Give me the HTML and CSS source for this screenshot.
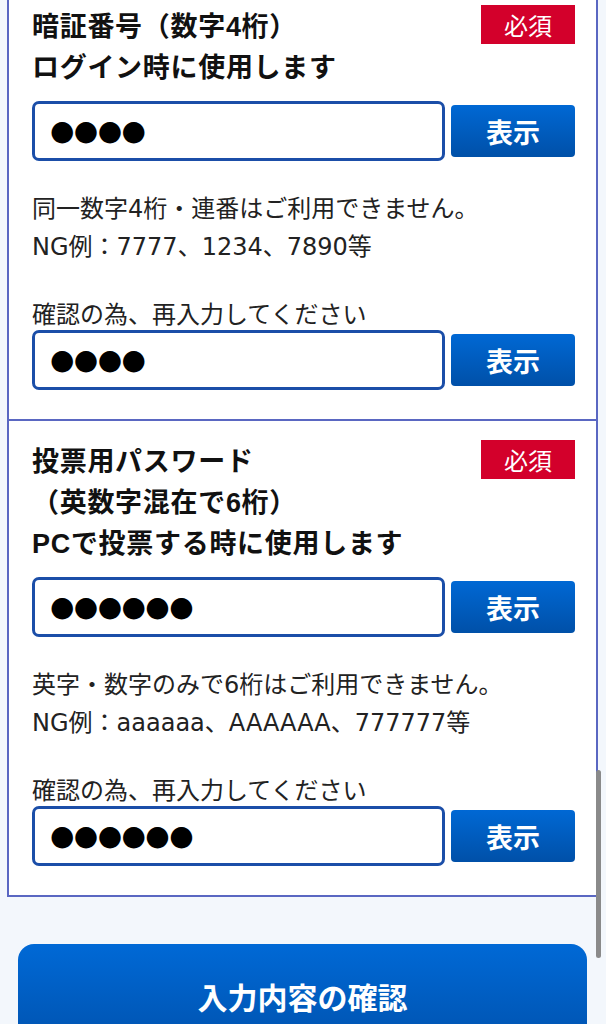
FILE: index.html
```html
<!DOCTYPE html>
<html lang="ja">
<head>
<meta charset="utf-8">
<title>パスワード設定</title>
<link rel="stylesheet" href="styles.css">
</head>
<body>
<div class="card">
  <section class="field">
    <div class="field-head">
      <h2 class="field-title">暗証番号（数字4桁）<br>ログイン時に使用します</h2>
      <span class="badge">必須</span>
    </div>
    <div class="input-row">
      <div class="input"><span class="mask">●●●●</span></div>
      <button class="show-btn" type="button">表示</button>
    </div>
    <p class="note">同一数字4桁・連番はご利用できません。<br>NG例：7777、1234、7890等</p>
    <p class="confirm-label">確認の為、再入力してください</p>
    <div class="input-row tight">
      <div class="input"><span class="mask">●●●●</span></div>
      <button class="show-btn" type="button">表示</button>
    </div>
  </section>
  <section class="field">
    <div class="field-head">
      <h2 class="field-title">投票用パスワード<br>（英数字混在で6桁）<br>PCで投票する時に使用します</h2>
      <span class="badge">必須</span>
    </div>
    <div class="input-row">
      <div class="input"><span class="mask">●●●●●●</span></div>
      <button class="show-btn" type="button">表示</button>
    </div>
    <p class="note">英字・数字のみで6桁はご利用できません。<br>NG例：aaaaaa、AAAAAA、777777等</p>
    <p class="confirm-label">確認の為、再入力してください</p>
    <div class="input-row tight">
      <div class="input"><span class="mask">●●●●●●</span></div>
      <button class="show-btn" type="button">表示</button>
    </div>
  </section>
</div>
<div class="submit-wrap">
  <button class="submit" type="button">入力内容の確認</button>
</div>
<div class="scroll-thumb"></div>
</body>
</html>
```
FILE: styles.css
```css
html, body {
  margin: 0;
  padding: 0;
}
body {
  background: #f3f7fc;
  font-family: "Liberation Sans", "Noto Sans CJK JP", sans-serif;
  color: #1a1a1a;
  height: 1024px;
  overflow: hidden;
  position: relative;
}
.card {
  margin: -14px 8px 0 7px;
  background: #fff;
  border: 2px solid #5a67c2;
  border-top: none;
}
.field {
  padding: 21px 21px 29px 23px;
}
.field + .field {
  border-top: 2px solid #5a67c2;
}
.field-head {
  display: flex;
  justify-content: space-between;
  align-items: flex-start;
}
.field-title {
  margin: 0;
  font-size: 27px;
  line-height: 41px;
  font-weight: 700;
  color: #111;
  letter-spacing: 0.7px;
}
.badge {
  margin-top: -2px;
  width: 94px;
  height: 39px;
  background: #d3002b;
  color: #fff;
  font-family: "Noto Sans CJK JP", sans-serif;
  font-size: 24px;
  line-height: 39px;
  text-align: center;
  flex: none;
}
.input-row {
  display: flex;
  align-items: center;
  gap: 6px;
  margin-top: 12px;
}
.input-row.tight {
  margin-top: 2px;
}
.input {
  flex: 1;
  height: 60px;
  box-sizing: border-box;
  border: 3px solid #1b4ea8;
  border-radius: 7px;
  background: #fff;
  display: flex;
  align-items: center;
  padding-left: 15px;
}
.mask {
  font-family: "DejaVu Sans", sans-serif;
  font-size: 28px;
  line-height: 1;
  letter-spacing: -0.6px;
  color: #000;
}
.show-btn {
  width: 124px;
  height: 52px;
  flex: none;
  border: none;
  border-radius: 4px;
  background: linear-gradient(#0068d4, #0050a8);
  color: #fff;
  font-family: "Noto Sans CJK JP", sans-serif;
  font-size: 27px;
  font-weight: 700;
  padding: 0;
}
.note {
  margin: 29px 0 0;
  font-family: "DejaVu Sans", "Noto Sans CJK JP", sans-serif;
  font-size: 24px;
  line-height: 38px;
  color: #222;
}
.confirm-label {
  margin: 32px 0 0;
  font-family: "Noto Sans CJK JP", sans-serif;
  font-size: 24px;
  line-height: 30px;
  color: #222;
}
.submit-wrap {
  padding: 47px 19px 0 18px;
}
.submit {
  display: block;
  width: 100%;
  height: 104px;
  border: none;
  border-radius: 16px;
  background: linear-gradient(#0069d6, #0052ae);
  color: #fff;
  font-family: "Noto Sans CJK JP", sans-serif;
  font-size: 30px;
  font-weight: 700;
  padding: 0;
}
.scroll-thumb {
  position: absolute;
  right: 5px;
  top: 770px;
  width: 5px;
  height: 188px;
  border-radius: 3px;
  background: #8a8a8a;
}
```
